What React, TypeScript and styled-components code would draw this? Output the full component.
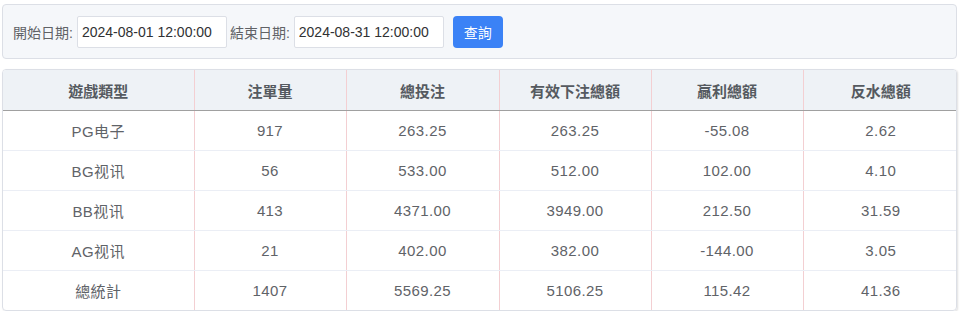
import styled, { createGlobalStyle } from 'styled-components';

const GlobalStyle = createGlobalStyle`
    body {
        margin: 0;
        background: #ffffff;
        font-family: 'Liberation Sans', 'Noto Sans CJK TC', 'Noto Sans CJK SC', sans-serif;
    }
`;

interface Row {
    name: string;
    count: string;
    total: string;
    valid: string;
    win: string;
    rebate: string;
}

const rows: Row[] = [
    { name: 'PG电子', count: '917', total: '263.25', valid: '263.25', win: '-55.08', rebate: '2.62' },
    { name: 'BG视讯', count: '56', total: '533.00', valid: '512.00', win: '102.00', rebate: '4.10' },
    { name: 'BB视讯', count: '413', total: '4371.00', valid: '3949.00', win: '212.50', rebate: '31.59' },
    { name: 'AG视讯', count: '21', total: '402.00', valid: '382.00', win: '-144.00', rebate: '3.05' },
    { name: '總統計', count: '1407', total: '5569.25', valid: '5106.25', win: '115.42', rebate: '41.36' },
];

const headers = ['遊戲類型', '注單量', '總投注', '有效下注總額', '贏利總額', '反水總額'];
const colWidths = [191, 152, 153, 152, 152, 155];

const App = () => {
    return (
        <Page>
            <GlobalStyle />
            <FilterBar>
                <Label>開始日期:</Label>
                <DateInput defaultValue='2024-08-01 12:00:00' />
                <Label>結束日期:</Label>
                <DateInput defaultValue='2024-08-31 12:00:00' />
                <SearchButton type='button'>查詢</SearchButton>
            </FilterBar>
            <TableBox>
                <Table>
                    <colgroup>
                        {colWidths.map((w, i) => (
                            <col key={i} style={{ width: w }} />
                        ))}
                    </colgroup>
                    <thead>
                        <tr>
                            {headers.map((h) => (
                                <Th key={h}>{h}</Th>
                            ))}
                        </tr>
                    </thead>
                    <tbody>
                        {rows.map((r, i) => (
                            <Tr key={r.name} $last={i === rows.length - 1}>
                                <Td>{r.name}</Td>
                                <Td>{r.count}</Td>
                                <Td>{r.total}</Td>
                                <Td>{r.valid}</Td>
                                <Td>{r.win}</Td>
                                <Td>{r.rebate}</Td>
                            </Tr>
                        ))}
                    </tbody>
                </Table>
            </TableBox>
        </Page>
    );
};

const Page = styled.div`
    padding: 4px 10px 0 2px;
`;

const FilterBar = styled.div`
    display: flex;
    align-items: center;
    height: 53px;
    padding: 0 0 0 10px;
    background: #f5f7fa;
    border: 1px solid #dcdfe6;
    border-radius: 4px;
`;

const Label = styled.span`
    font-size: 14px;
    color: #606266;
    margin-right: 4px;
`;

const DateInput = styled.input`
    box-sizing: border-box;
    width: 150px;
    height: 32px;
    padding: 0 4px;
    margin-right: 3px;
    border: 1px solid #dcdfe6;
    border-radius: 2px;
    background: #ffffff;
    font-family: 'Liberation Sans', sans-serif;
    font-size: 14px;
    color: #303133;
    outline: none;
`;

const SearchButton = styled.button`
    margin-left: 6px;
    width: 50px;
    height: 32px;
    border: none;
    border-radius: 4px;
    background: #3b82f6;
    color: #ffffff;
    font-family: 'Noto Sans CJK TC', sans-serif;
    font-size: 14px;
    cursor: pointer;
`;

const TableBox = styled.div`
    margin-top: 10px;
    border: 1px solid #dcdfe6;
    border-radius: 4px;
    overflow: hidden;
    box-shadow: 1px 1px 2px rgba(0, 0, 0, 0.12);
`;

const Table = styled.table`
    width: 100%;
    table-layout: fixed;
    border-collapse: collapse;
    font-size: 15px;
    letter-spacing: 0.4px;
    color: #5f6368;
`;

const Th = styled.th`
    height: 40px;
    padding: 0;
    background: #eef2f6;
    font-weight: bold;
    color: #555a60;
    letter-spacing: 0;
    border-bottom: 1px solid #a0a0a0;
    border-left: 1px solid #f3cfd2;
    &:first-child {
        border-left: none;
    }
`;

const Tr = styled.tr<{ $last: boolean }>`
    td {
        border-bottom: ${(p) => (p.$last ? 'none' : '1px solid #ebeef5')};
    }
`;

const Td = styled.td`
    height: 39px;
    padding: 0;
    text-align: center;
    border-left: 1px solid #f3cfd2;
    &:first-child {
        border-left: none;
    }
`;

export default App;
